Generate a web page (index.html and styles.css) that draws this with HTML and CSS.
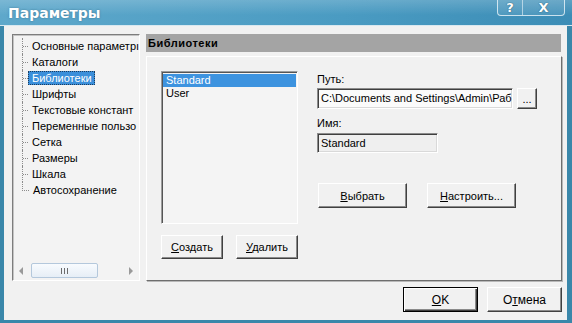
FILE: index.html
```html
<!DOCTYPE html>
<html>
	<head>
		<meta charset="utf-8">
		<title>Параметры</title>
		<link rel="stylesheet" href="styles.css">
	</head>
	<body>
		<div class="window">
			<div class="titlebar">
				<span class="title">Параметры</span>
				<div class="caption-buttons">
					<span class="cap-btn help">?</span>
					<span class="cap-btn close">X</span>
				</div>
			</div>
			<div class="frame">
				<div class="main">
					<div class="tree">
						<ul class="tree-list">
							<li><span class="node">Основные параметрı</span></li>
							<li><span class="node">Каталоги</span></li>
							<li><span class="node selected">Библиотеки</span></li>
							<li><span class="node">Шрифты</span></li>
							<li><span class="node">Текстовые констант</span></li>
							<li><span class="node">Переменные пользо</span></li>
							<li><span class="node">Сетка</span></li>
							<li><span class="node">Размеры</span></li>
							<li><span class="node">Шкала</span></li>
							<li class="last"><span class="node">Автосохранение</span></li>
						</ul>
						<div class="hscroll">
							<span class="arrow arrow-left"></span>
							<span class="thumb"><span class="grip"></span></span>
							<span class="arrow arrow-right"></span>
						</div>
					</div>
					<div class="page">
						<div class="page-header">Библиотеки</div>
						<div class="page-body">
							<div class="col-left">
								<ul class="listbox">
									<li class="selected">Standard</li>
									<li>User</li>
								</ul>
								<div class="btn-row">
									<button class="btn btn-small"><u>С</u>оздать</button>
									<button class="btn btn-small"><u>У</u>далить</button>
								</div>
							</div>
							<div class="col-right">
								<label class="field-label">Путь:</label>
								<div class="path-row">
									<div class="input input-path">C:\Documents and Settings\Admin\Раб</div>
									<button class="btn btn-browse">...</button>
								</div>
								<label class="field-label name-label">Имя:</label>
								<div class="input input-name">Standard</div>
								<div class="action-row">
									<button class="btn btn-wide"><u>В</u>ыбрать</button>
									<button class="btn btn-wide"><u>Н</u>астроить...</button>
								</div>
							</div>
						</div>
					</div>
				</div>
				<div class="footer">
					<button class="btn btn-dialog btn-default"><u>O</u>K</button>
					<button class="btn btn-dialog">О<u>т</u>мена</button>
				</div>
			</div>
		</div>
	</body>
</html>
```

FILE: styles.css
```css
* {
	box-sizing: border-box;
	font-family: 'Liberation Sans', Arial, sans-serif;
}

body {
	margin: 0;
	width: 572px;
	height: 323px;
	overflow: hidden;
	background-color: #3a87aa;
}

.window {
	display: flex;
	flex-direction: column;
	width: 572px;
	height: 323px;
}

/* title bar */
.titlebar {
	position: relative;
	display: flex;
	align-items: center;
	height: 26px;
	padding-left: 8px;
	background: linear-gradient(to bottom, rgba(255,255,255,0.18), rgba(255,255,255,0) 60%),
		linear-gradient(to right, #5ea8cb, #4a9bc2 60%, #3c8db6);
	border-bottom: 1px solid #d8e8f0;
}
.title {
	color: #fff;
	font-family: 'DejaVu Sans', sans-serif;
	font-size: 14px;
	font-weight: bold;
	text-shadow: 0 0 2px rgba(30, 80, 110, 0.6);
}
.caption-buttons {
	position: absolute;
	right: 7px;
	top: -1px;
	display: flex;
	height: 17px;
	border: 1px solid rgba(235, 245, 250, 0.8);
	border-top: none;
	border-radius: 0 0 4px 4px;
	background: rgba(255, 255, 255, 0.08);
}
.cap-btn {
	display: flex;
	align-items: center;
	justify-content: center;
	color: #fff;
	font-family: 'DejaVu Sans', sans-serif;
	font-size: 13px;
	font-weight: bold;
	text-shadow: 0 0 1px #2a5f7a, 0 0 1px #2a5f7a;
}
.cap-btn.help {
	width: 25px;
	border-right: 1px solid rgba(235, 245, 250, 0.6);
}
.cap-btn.close {
	width: 41px;
}

/* client area */
.frame {
	flex: 1;
	display: flex;
	flex-direction: column;
	margin: 0 5px 3px 4px;
	padding: 8px 5px 7px 8px;
	background-color: #f1f1f1;
	font-size: 11px;
	color: #000;
}

.main {
	display: flex;
	gap: 6px;
	height: 247px;
}

/* tree */
.tree {
	display: flex;
	flex-direction: column;
	width: 128px;
	border-top: 1px solid #7d7d7d;
	border-left: 1px solid #7d7d7d;
	border-right: 1px solid #fff;
	border-bottom: 1px solid #fff;
	box-shadow: inset 1px 1px 0 #c4c4c4;
	background-color: #f3f3f3;
	overflow: hidden;
}
.tree-list {
	flex: 1;
	margin: 0;
	padding: 3px 0 0 9px;
	list-style: none;
	white-space: nowrap;
	overflow: hidden;
}
.tree-list li {
	display: flex;
	align-items: center;
	height: 16px;
	border-left: 1px dotted #8c8c8c;
}
.tree-list li::before {
	content: "";
	flex-shrink: 0;
	width: 5px;
	border-top: 1px dotted #8c8c8c;
}
.tree-list li.last {
	border-left: none;
	align-items: flex-start;
}
.tree-list li.last::before {
	height: 8px;
	width: 6px;
	border-top: none;
	border-left: 1px dotted #8c8c8c;
	border-bottom: 1px dotted #8c8c8c;
}
.tree-list li.last .node {
	margin-top: 1px;
}
.node {
	flex-shrink: 0;
	padding: 0 2px 0 3px;
	border: 1px solid transparent;
	line-height: 12px;
}
.node.selected {
	background-color: #3b8fda;
	color: #fff;
	border: 1px dotted #1d3c5e;
}

.hscroll {
	display: flex;
	align-items: center;
	height: 17px;
	margin-bottom: 1px;
	padding: 0 6px;
}
.arrow {
	width: 0;
	height: 0;
	border-top: 4px solid transparent;
	border-bottom: 4px solid transparent;
}
.arrow-left {
	border-right: 4px solid #9a9a9a;
}
.arrow-right {
	margin-left: auto;
	border-left: 4px solid #9a9a9a;
}
.thumb {
	display: flex;
	align-items: center;
	justify-content: center;
	width: 67px;
	height: 15px;
	margin-left: 8px;
	border: 1px solid #b4c8dc;
	border-radius: 2px;
	background: linear-gradient(to bottom, #f8fbfe, #e6eef6);
}
.grip {
	width: 7px;
	height: 6px;
	background: repeating-linear-gradient(to right, #6c6c6c 0, #6c6c6c 1px, transparent 1px, transparent 3px);
}

/* property page */
.page {
	flex: 1;
	display: flex;
	flex-direction: column;
	gap: 4px;
}
.page-header {
	height: 18px;
	margin-right: 1px;
	padding-left: 2px;
	line-height: 18px;
	background-color: #a4a4a4;
	font-weight: bold;
	font-size: 11px;
	letter-spacing: 0.5px;
}
.page-body {
	flex: 1;
	display: flex;
	padding: 14px 0 0 14px;
	border-top: 1px solid #fff;
	border-left: 1px solid #fff;
	border-right: 1px solid #6e6e6e;
	border-bottom: 1px solid #6e6e6e;
	box-shadow: 1px 1px 0 #b8b8b8;
}

.col-left {
	display: flex;
	flex-direction: column;
	width: 137px;
}
.listbox {
	height: 153px;
	margin: 0 0 11px;
	padding: 0 1px;
	list-style: none;
	border-top: 1px solid #9c9c9c;
	border-left: 1px solid #9c9c9c;
	border-right: 1px solid #fff;
	border-bottom: 1px solid #fff;
	box-shadow: inset 1px 1px 0 #555;
	background-color: #f4f4f4;
}
.listbox li {
	height: 13px;
	padding-left: 3px;
	line-height: 13px;
}
.listbox li:first-child {
	margin-top: 2px;
}
.listbox li.selected {
	background-color: #3d93df;
	color: #fff;
}

.btn-row {
	display: flex;
	gap: 13px;
}

.col-right {
	display: flex;
	flex-direction: column;
	margin-left: 19px;
}
.field-label {
	margin-top: 2px;
	line-height: 13px;
}
.name-label {
	margin-top: 8px;
}
.path-row {
	display: flex;
	gap: 4px;
	margin-top: 2px;
}
.input {
	height: 21px;
	padding: 0 3px;
	line-height: 19px;
	white-space: nowrap;
	overflow: hidden;
	border-top: 1px solid #8c8c8c;
	border-left: 1px solid #8c8c8c;
	border-right: 1px solid #fff;
	border-bottom: 1px solid #fff;
	box-shadow: inset 1px 1px 0 #3f3f3f, inset -1px -1px 0 #d9d9d9;
	background-color: #f5f5f5;
}
.input-path {
	width: 196px;
	padding-right: 0;
	background-color: #fbfbfb;
}
.input-name {
	width: 121px;
	height: 20px;
	margin-top: 3px;
	background-color: #efefef;
}

.action-row {
	display: flex;
	gap: 20px;
	margin-top: 30px;
	padding-left: 1px;
}

/* buttons */
.btn {
	height: 25px;
	padding: 0;
	font-size: 11px;
	color: #000;
	background-color: #f1f1f1;
	border-top: 1px solid #fff;
	border-left: 1px solid #fff;
	border-right: 1px solid #404040;
	border-bottom: 1px solid #404040;
	box-shadow: inset -1px -1px 0 #8a8a8a;
	border-radius: 0;
}
.btn u {
	text-decoration-thickness: 1px;
}
.btn-small {
	width: 63px;
	height: 24px;
}
.btn-browse {
	width: 20px;
	height: 21px;
	line-height: 10px;
}
.btn-wide {
	width: 89px;
}
.footer {
	display: flex;
	justify-content: flex-end;
	gap: 9px;
	margin-top: 6px;
}
.btn-dialog {
	width: 75px;
	height: 25px;
	font-size: 12px;
}
.btn-default {
	border: 1px solid #000;
	box-shadow: inset 1px 1px 0 #fff, inset -1px -1px 0 #404040, inset -2px -2px 0 #8a8a8a;
}
```
